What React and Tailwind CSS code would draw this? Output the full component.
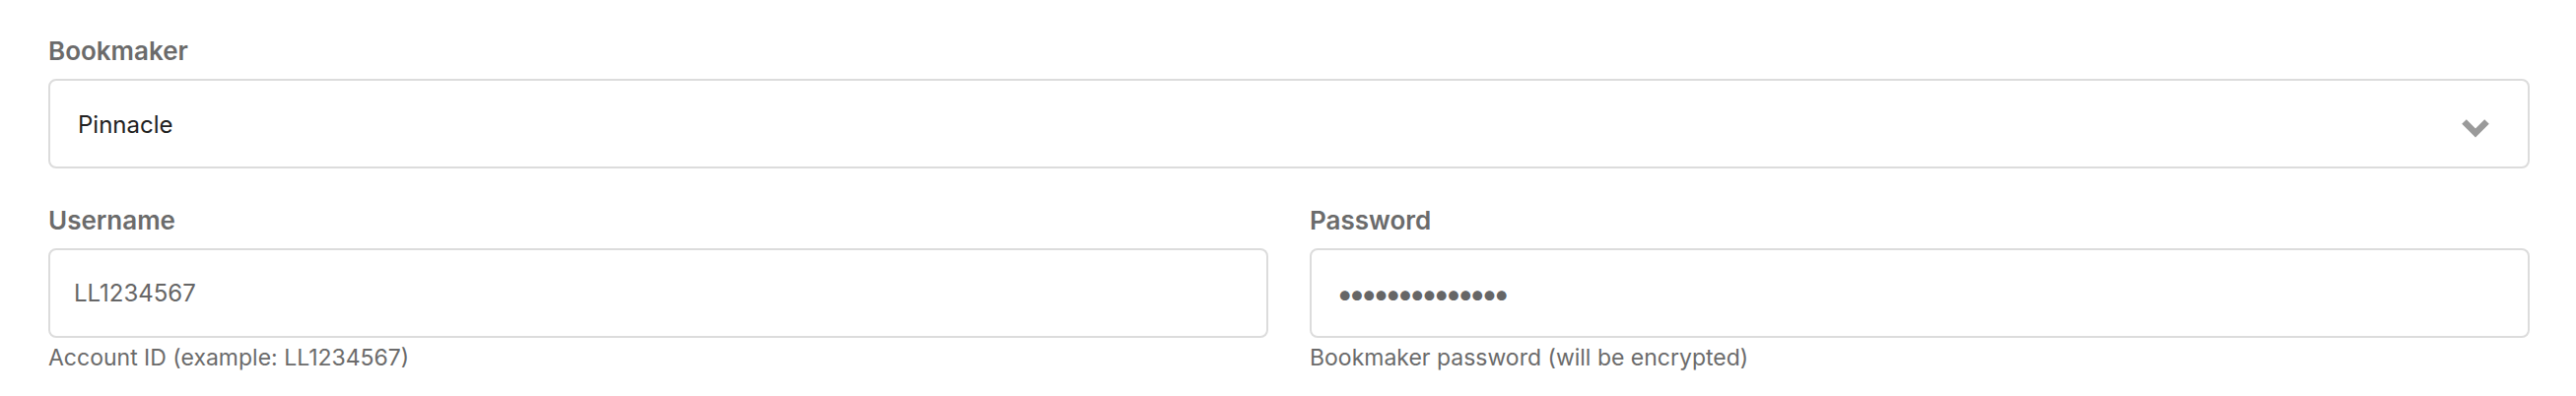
import React from "react";

const font = { fontFamily: "Inter, 'Noto Sans', 'Liberation Sans', sans-serif" };

function Label({ children, className = "" }) {
  return (
    <div className={"text-[26px] leading-[32px] font-semibold text-[#6b6b6b] " + className}>
      {children}
    </div>
  );
}

function Field({ label, value, helper, className = "", valueClass = "text-[24px]" }) {
  return (
    <div className={"flex flex-col " + className}>
      <Label>{label}</Label>
      <input
        readOnly
        value={value}
        className={
          "mt-[12px] h-[91px] w-full rounded-[8px] border-2 border-[#dcdcdc] bg-white pl-[24px] pr-[24px] text-[#666666] outline-none " +
          valueClass
        }
        style={font}
      />
      <div className="mt-[6px] text-[23px] leading-[28px] text-[#6b6b6b]">{helper}</div>
    </div>
  );
}

export default function App() {
  return (
    <div className="min-h-[402px] w-full bg-white pl-[49px] pr-[47px] pt-[36px]" style={font}>
      <Label>Bookmaker</Label>
      <div className="mt-[12px] flex h-[91px] items-center justify-between rounded-[8px] border-2 border-[#dcdcdc] bg-white pl-[28px] pr-[38px]">
        <span className="mt-[2px] text-[24px] text-[#222222]">Pinnacle</span>
        <svg width="30" height="22" viewBox="0 0 30 22" className="mt-[8px]" aria-hidden="true">
          <polyline points="3.5,4.5 15,16 26.5,4.5" fill="none" stroke="#9a9a9a" strokeWidth="6.5" strokeLinecap="butt" strokeLinejoin="miter" />
        </svg>
      </div>
      <div className="mt-[37px] grid grid-cols-2 gap-[42px]">
        <Field label="Username" value="LL1234567" helper="Account ID (example: LL1234567)" />
        <Field
          label="Password"
          value="••••••••••••••"
          helper="Bookmaker password (will be encrypted)"
          valueClass="pl-[25px] text-[31px] tracking-[-5.2px] text-[#6b6b6b]"
        />
      </div>
    </div>
  );
}
